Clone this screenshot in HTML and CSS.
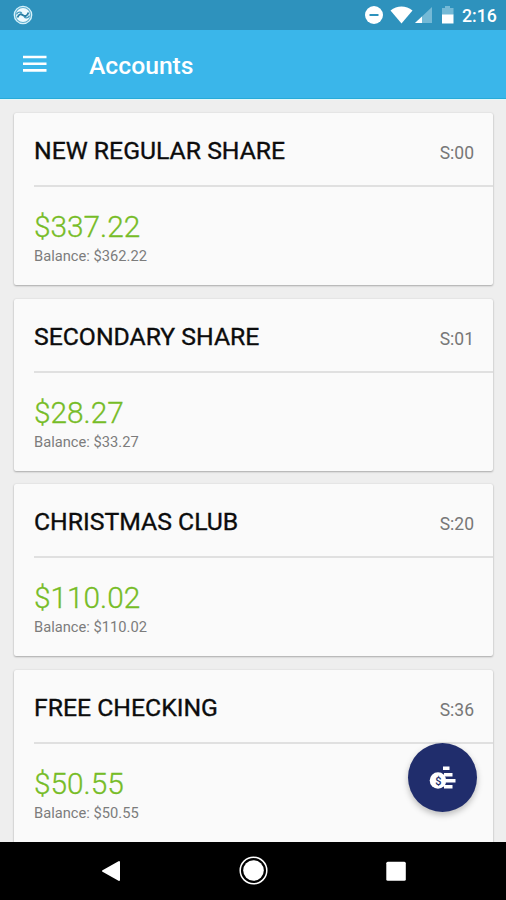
FILE: index.html
```html
<!DOCTYPE html>
<html lang="en">
<head>
<meta charset="utf-8">
<title>Accounts</title>
<link rel="stylesheet" href="styles.css">
</head>
<body>
<div class="screen">
  <div class="status">
    <svg class="sync" width="20" height="20" viewBox="0 0 20 20"><circle cx="10" cy="10" r="8.700" fill="#5fafd0" stroke="#d6f1fa" stroke-width="1.300"/><circle cx="10" cy="10" r="7" fill="#eefafe"/><path d="M3.500 9.300C5 6.800 7.500 6.600 8.800 8.200M16.500 10.700C15 13.200 12.500 13.400 11.200 11.800" fill="none" stroke="#3f98bf" stroke-width="1.300"/><path d="M4.500 12.500C6 8.500 8 8.800 10 10.200S14 11.500 15.500 7.500" fill="none" stroke="#287ea4" stroke-width="1.900"/></svg>
    <svg class="signals" width="92" height="22" viewBox="0 0 92 22"><circle cx="10" cy="11" r="9" fill="#fff"/><path d="M5.500 11h9" stroke="#2e92bd" stroke-width="2"/><path d="M26.500 6.500C33 1.200 42 1.200 48.500 6.500L37.500 19.500Z" fill="#fff"/><path d="M68 3V19H51Z" fill="#74b9d6"/><path d="M58 12.500V19H51Z" fill="#fff"/><path d="M78 4h3V2h5v2h3.500v7H78Z" fill="#74b9d6"/><path d="M78 10.500h11.500V19.500H78Z" fill="#fff"/></svg>
    <span class="time">2:16</span>
  </div>
  <header class="appbar">
    <svg width="24" height="18" viewBox="0 0 24 18"><path d="M0 2h23.500M0 8.700h23.500M0 15.400h23.500" stroke="#fff" stroke-width="2.600"/></svg>
    <h1>Accounts</h1>
  </header>
  <main class="list">
    <section class="card"><div class="head"><h2>NEW REGULAR SHARE</h2><span class="code">S:00</span></div><div class="body"><div class="amount">$337.22</div><div class="balance">Balance: $362.22</div></div></section>
    <section class="card"><div class="head"><h2>SECONDARY SHARE</h2><span class="code">S:01</span></div><div class="body"><div class="amount">$28.27</div><div class="balance">Balance: $33.27</div></div></section>
    <section class="card"><div class="head"><h2>CHRISTMAS CLUB</h2><span class="code">S:20</span></div><div class="body"><div class="amount">$110.02</div><div class="balance">Balance: $110.02</div></div></section>
    <section class="card"><div class="head"><h2>FREE CHECKING</h2><span class="code">S:36</span></div><div class="body"><div class="amount">$50.55</div><div class="balance">Balance: $50.55</div></div></section>
  </main>
  <button class="fab" aria-label="Transfer"><svg width="69" height="69" viewBox="0 0 69 69"><path d="M35 23.500h6.500v3.500h-6.500zM36 30h8.500v3.500h-8.500zM38 36h9.500v3.500h-9.500zM36 42h8.500v3.500h-8.500z" fill="#fff"/><circle cx="30" cy="37.500" r="8.300" fill="#fff"/><text class="coin" x="30.500" y="41.500" text-anchor="middle">$</text></svg></button>
  <nav class="navbar">
    <svg width="20" height="22" viewBox="0 0 20 22"><path d="M18 2V20L2 11Z" fill="#fff" stroke="#fff" stroke-width="2" stroke-linejoin="round"/></svg>
    <svg width="30" height="30" viewBox="0 0 30 30"><circle cx="14.500" cy="14.500" r="13.300" fill="none" stroke="#fff" stroke-width="1.500"/><circle cx="14.500" cy="14.500" r="10.300" fill="#fff"/></svg>
    <svg width="20" height="20" viewBox="0 0 20 20"><rect x=".3" y=".8" width="19.500" height="19" rx="1.500" fill="#fff"/></svg>
  </nav>
</div>
</body>
</html>
```

FILE: styles.css
```css
* { box-sizing: border-box; }
body { margin: 0; font-family: Roboto, sans-serif; }
h1, h2 { margin: 0; }
svg { display: block; flex: none; }
.screen { position: relative; width: 506px; height: 900px; display: flex; flex-direction: column; overflow: hidden; background: #eee; }
.status { height: 30px; flex: none; display: flex; align-items: center; padding: 0 4px 0 13px; background: #2e92bd; color: #fff; }
.signals { margin-left: auto; }
.time { width: 40px; margin-left: 6px; padding-top: 2px; font-size: 17.7px; font-weight: 500; line-height: 28px; white-space: nowrap; }
.appbar { height: 69px; flex: none; display: flex; align-items: center; gap: 42px; padding: 0 24px 0 23px; background: #3ab6ea; border-bottom: 1px solid #27abd9; color: #fff; }
.appbar h1 { font-size: 24.7px; font-weight: 500; line-height: 32px; padding-top: 3px; }
.list { flex: 1; min-height: 0; overflow: hidden; display: flex; flex-direction: column; gap: 13.7px; padding: 13px 13px 0 14px; border-top: 1px solid #e2f8fa; }
.card { flex: none; height: 172px; background: #fafafa; border-radius: 2px; box-shadow: 0 1px 2px rgba(0,0,0,.27), 0 0 2px rgba(0,0,0,.1); }
.card:last-child { height: 190px; }
.head { height: 74px; margin-left: 20px; padding: 3px 19px 0 0; display: flex; align-items: center; justify-content: space-between; border-bottom: 2px solid #e0e0e0; }
.head h2 { padding-top: 1px; font-size: 24.75px; font-weight: 400; line-height: 32px; color: #0c0c0c; -webkit-text-stroke: .35px #0c0c0c; }
.code { font-size: 17.5px; line-height: 24px; padding-top: 5px; color: #777; }
.body { padding: 21px 20px 0; }
.amount { font-size: 29.8px; font-weight: 300; line-height: 38px; color: #76bc26; -webkit-text-stroke: .3px #76bc26; }
.balance { font-size: 14.7px; line-height: 20px; color: #7c7c7c; }
.fab { position: absolute; left: 408px; top: 743px; width: 69px; height: 69px; padding: 0; border: 0; border-radius: 50%; background: #202d6c; box-shadow: 0 3px 6px rgba(0,0,0,.25); }
.coin { font: 500 11px Roboto, sans-serif; fill: #202d6c; }
.navbar { height: 58px; flex: none; display: flex; align-items: center; justify-content: space-between; padding: 0 100px 0 101px; background: #000; }
```
